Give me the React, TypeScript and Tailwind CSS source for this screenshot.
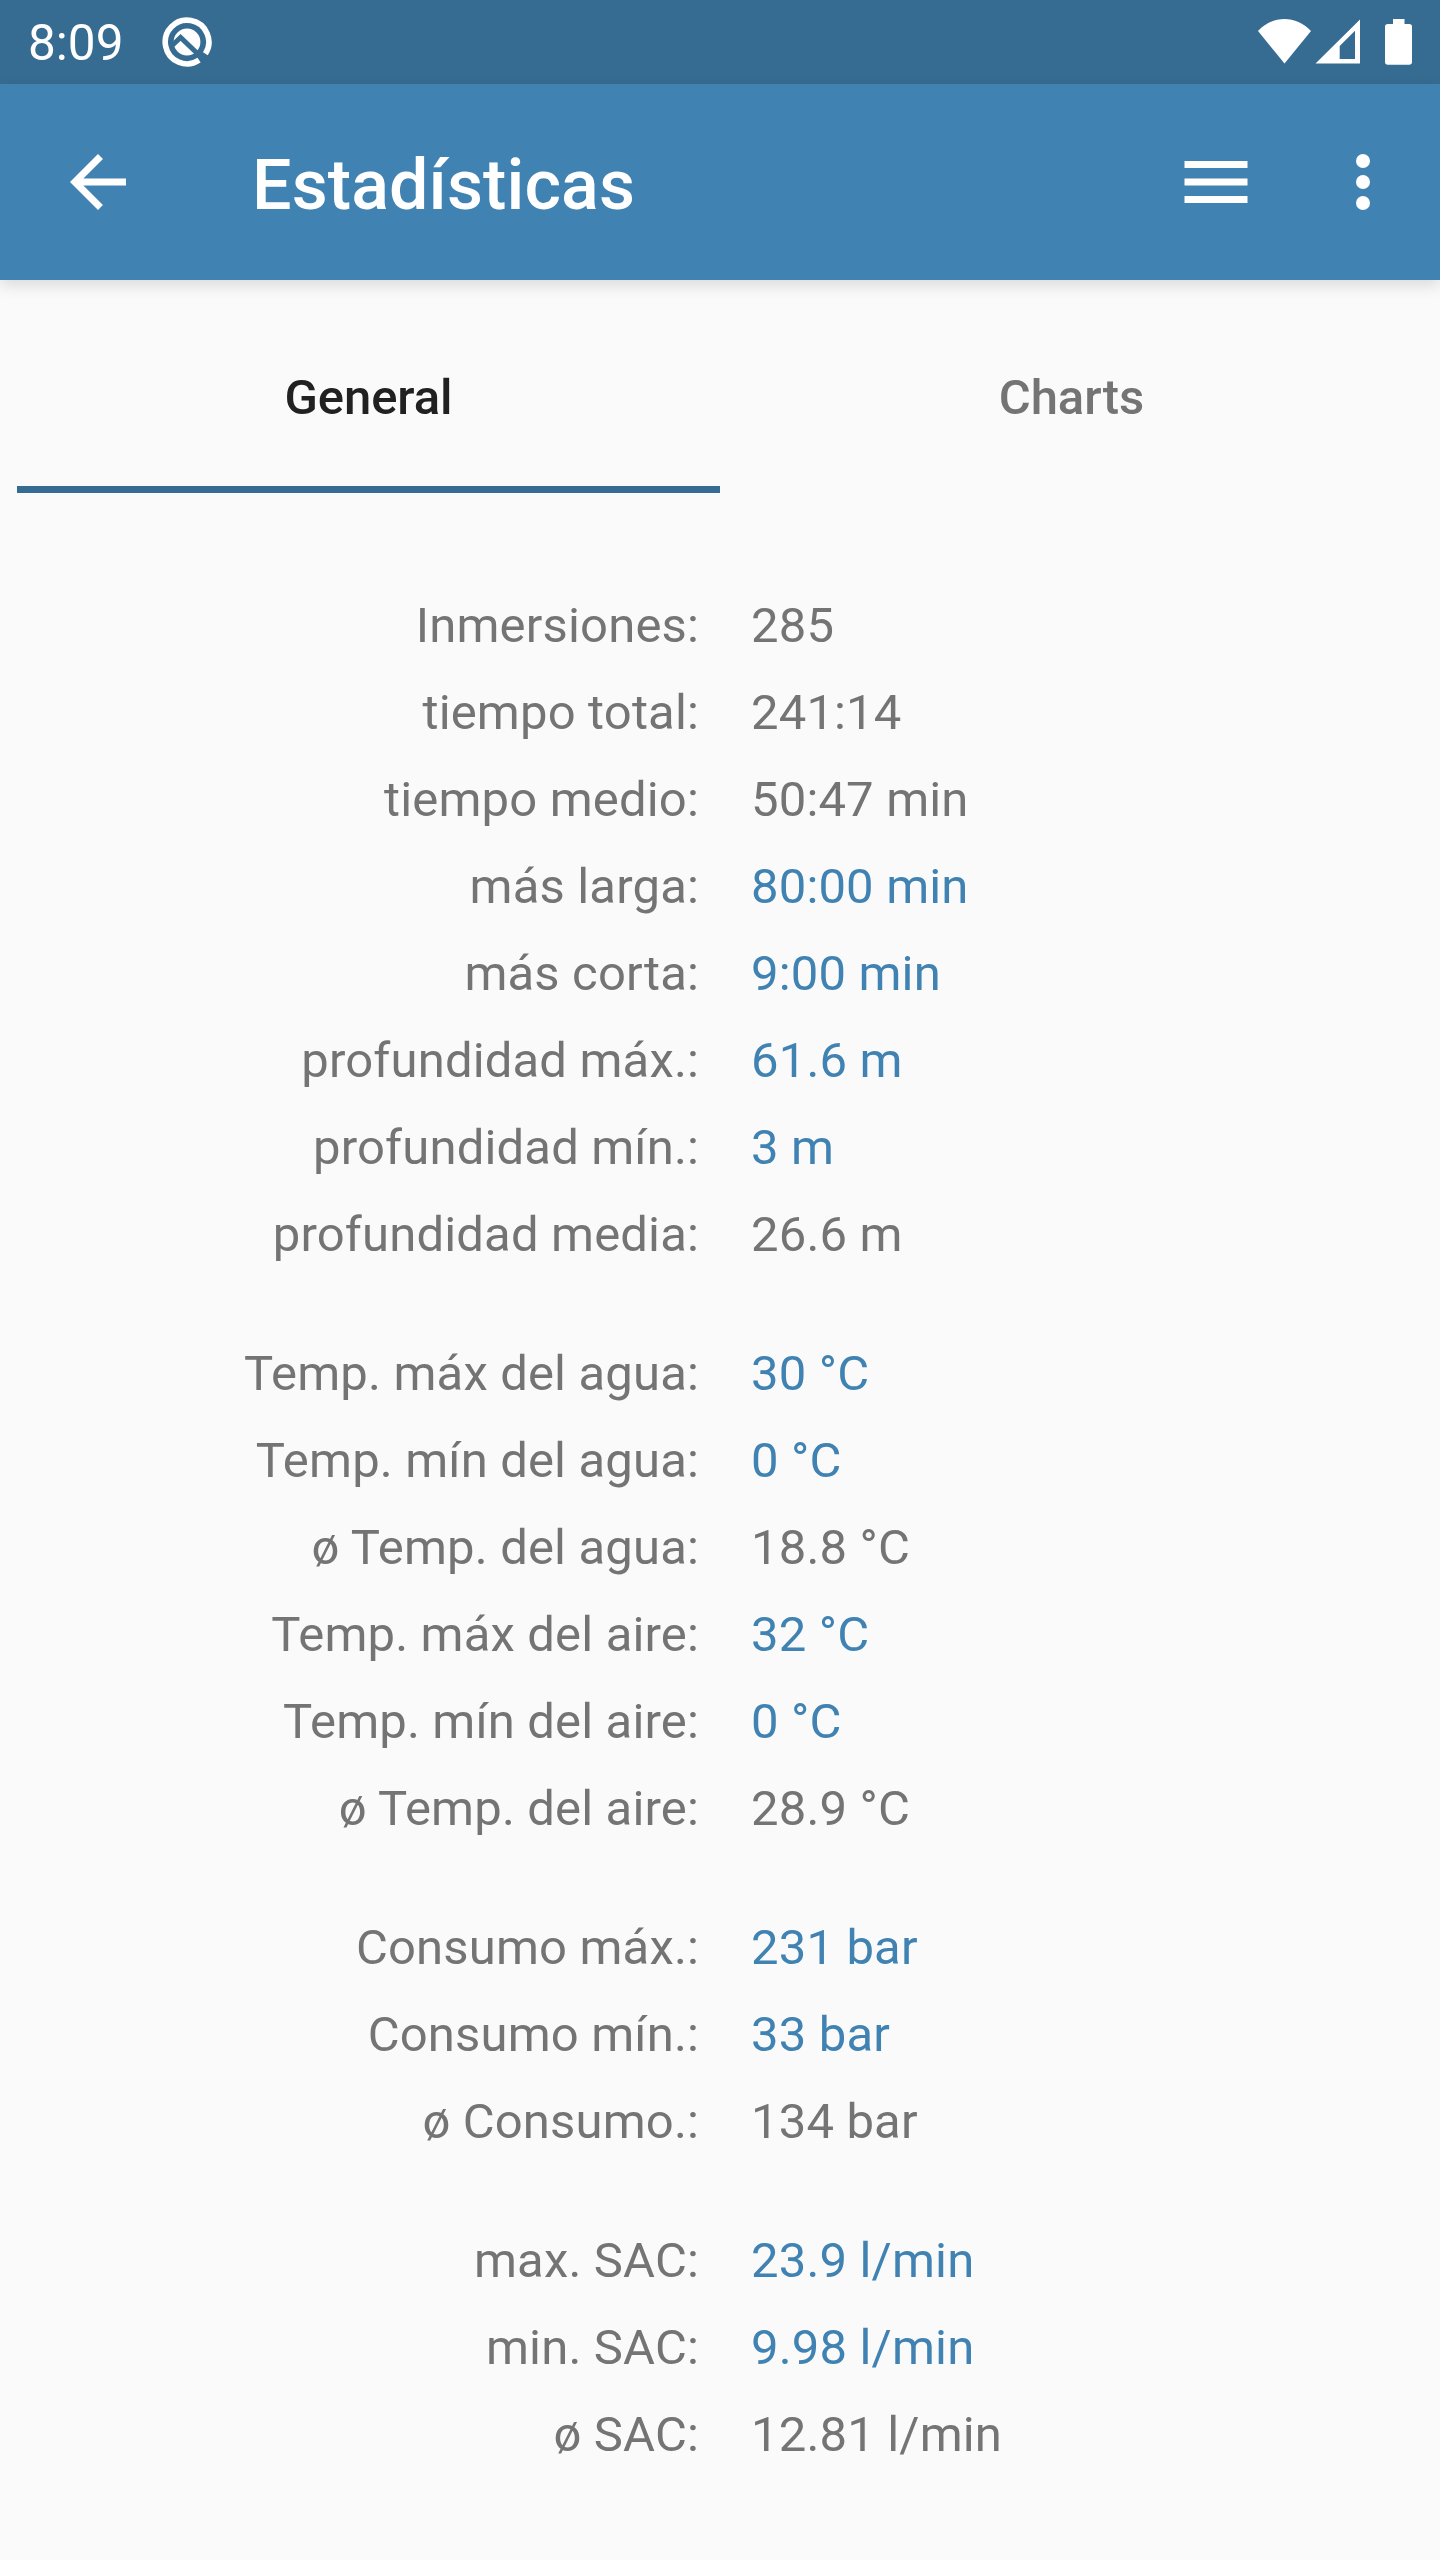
type Stat = {
  label: string
  value: string
  link?: boolean
}

const groups: Stat[][] = [
  [
    { label: 'Inmersiones:', value: '285' },
    { label: 'tiempo total:', value: '241:14' },
    { label: 'tiempo medio:', value: '50:47 min' },
    { label: 'más larga:', value: '80:00 min', link: true },
    { label: 'más corta:', value: '9:00 min', link: true },
    { label: 'profundidad máx.:', value: '61.6 m', link: true },
    { label: 'profundidad mín.:', value: '3 m', link: true },
    { label: 'profundidad media:', value: '26.6 m' },
  ],
  [
    { label: 'Temp. máx del agua:', value: '30 °C', link: true },
    { label: 'Temp. mín del agua:', value: '0 °C', link: true },
    { label: 'ø Temp. del agua:', value: '18.8 °C' },
    { label: 'Temp. máx del aire:', value: '32 °C', link: true },
    { label: 'Temp. mín del aire:', value: '0 °C', link: true },
    { label: 'ø Temp. del aire:', value: '28.9 °C' },
  ],
  [
    { label: 'Consumo máx.:', value: '231 bar', link: true },
    { label: 'Consumo mín.:', value: '33 bar', link: true },
    { label: 'ø Consumo.:', value: '134 bar' },
  ],
  [
    { label: 'max. SAC:', value: '23.9 l/min', link: true },
    { label: 'min. SAC:', value: '9.98 l/min', link: true },
    { label: 'ø SAC:', value: '12.81 l/min' },
  ],
]

function StatusBar() {
  return (
    <div className="flex h-[84px] items-center bg-[#366c92] pl-7 text-white">
      <span className="w-[96px] pt-[3px] text-[49.5px] leading-none">8:09</span>
      <svg viewBox="0 0 50 50" className="ml-[38px] size-[50px]" fill="none">
        <path d="M37.1 43.2A21.8 21.8 0 1 1 43.4 36.8" stroke="white" strokeWidth="5.6" />
        <circle cx="25" cy="25" r="13.4" fill="white" />
        <path d="M9 29.5L18.6 20.5L38.5 39.5" stroke="#366c92" strokeWidth="5" />
      </svg>
      <div className="ml-auto flex h-full items-start pt-[19px] pr-7">
        <svg viewBox="0 0 53 46" className="h-[46px] w-[53px]" fill="white">
          <path d="M0 12C15-4 38-4 53 12L26.5 44.5Z" />
        </svg>
        <svg viewBox="0 0 45 46" className="ml-1 h-[46px] w-[45px]" fill="white" fillRule="evenodd">
          <path d="M0.5 44.5L45 0.5V44.5ZM24.7 27V40H40V11.7Z" />
        </svg>
        <svg viewBox="0 0 27 46" className="ml-[25px] h-[46px] w-[27px]" fill="white">
          <path d="M8 0H19.5V5H24.2A2.8 2.8 0 0 1 27 7.8V43A2.8 2.8 0 0 1 24.2 45.7H2.8A2.8 2.8 0 0 1 0 43V7.8A2.8 2.8 0 0 1 2.8 5H8Z" />
        </svg>
      </div>
    </div>
  )
}

function AppBar() {
  return (
    <header className="flex h-[196px] items-center bg-[#4082b2] text-white shadow-[0_6px_14px_rgba(0,0,0,0.12)]">
      <button type="button" aria-label="Back" className="ml-14">
        <svg viewBox="0 0 24 24" className="size-[84px]" fill="currentColor">
          <path d="M20 11H7.83l5.59-5.59L12 4l-8 8 8 8 1.41-1.41L7.83 13H20v-2z" />
        </svg>
      </button>
      <h1 className="ml-28 pt-[5px] text-[70px] leading-none font-medium tracking-[0.1px]">Estadísticas</h1>
      <button type="button" aria-label="Menu" className="ml-auto">
        <svg viewBox="0 0 24 24" className="size-[84px]" fill="currentColor">
          <path d="M3 18h18v-2H3v2zm0-5h18v-2H3v2zm0-7v2h18V6H3z" />
        </svg>
      </button>
      <button type="button" aria-label="More" className="mr-[35px] ml-[63px]">
        <svg viewBox="0 0 24 24" className="size-[84px]" fill="currentColor">
          <circle cx="12" cy="6" r="2" />
          <circle cx="12" cy="12" r="2" />
          <circle cx="12" cy="18" r="2" />
        </svg>
      </button>
    </header>
  )
}

function Tabs() {
  return (
    <div className="mx-[17px] grid h-[213px] grid-cols-2 text-[49px] font-medium">
      <button type="button" className="border-b-[7px] border-[#366c92] pt-[29px] tracking-[-0.1px] text-[#212121]">
        General
      </button>
      <button type="button" className="border-b-[7px] border-transparent pt-[29px] text-[#747474]">
        Charts
      </button>
    </div>
  )
}

export default function App() {
  return (
    <div className="h-[2560px] w-[1440px] overflow-hidden bg-[#fafafa] font-['Roboto',sans-serif]">
      <StatusBar />
      <AppBar />
      <Tabs />
      <main className="flex flex-col gap-[52px] pt-[89px] text-[49px] leading-[87px] tracking-[0.16px] text-[#747474]">
        {groups.map((rows, i) => (
          <dl key={i}>
            {rows.map((row) => (
              <div key={row.label} className="grid h-[87px] grid-cols-[699px_1fr] gap-[52px]">
                <dt className="text-right">{row.label}</dt>
                <dd className={row.link ? 'text-[#4082b2]' : ''}>{row.value}</dd>
              </div>
            ))}
          </dl>
        ))}
      </main>
    </div>
  )
}
